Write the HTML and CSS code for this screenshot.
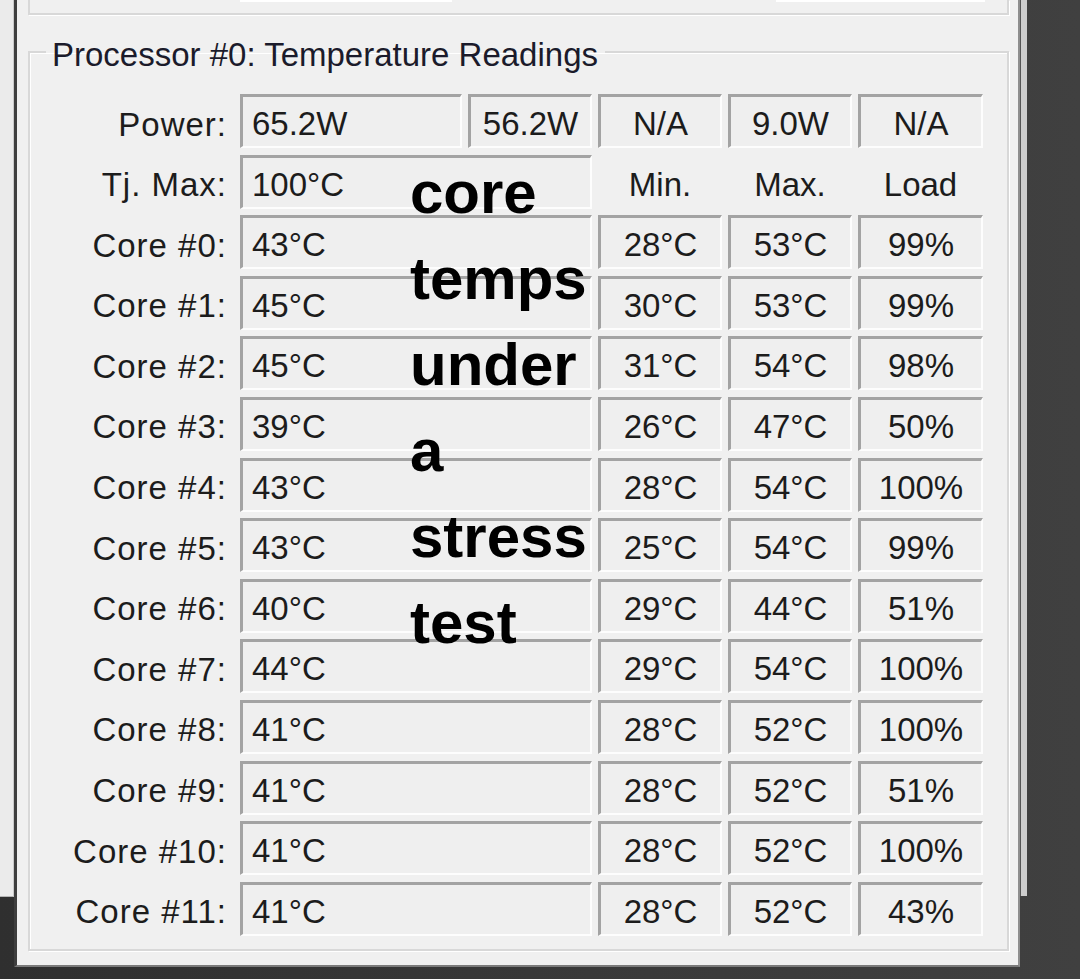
FILE: index.html
```html
<!DOCTYPE html>
<html>
<head>
<meta charset="utf-8">
<link rel="stylesheet" href="styles.css">
</head>
<body>
<div class="desktop">
  <div class="backwin backwin-left"></div>
  <div class="backwin backwin-right"></div>
  <div class="window">
    <div class="prev-group">
      <div class="prev-field field-a"></div>
      <div class="prev-field field-b"></div>
    </div>
    <fieldset class="group">
      <legend>Processor #0: Temperature Readings</legend>
      <div class="grid">
        <div class="lbl">Power:</div>
        <div class="cell left">65.2W</div>
        <div class="cell">56.2W</div>
        <div class="cell">N/A</div>
        <div class="cell">9.0W</div>
        <div class="cell">N/A</div>

        <div class="lbl">Tj. Max:</div>
        <div class="cell left span2">100°C</div>
        <div class="hdr">Min.</div>
        <div class="hdr">Max.</div>
        <div class="hdr">Load</div>

        <div class="lbl">Core #0:</div><div class="cell left span2">43°C</div><div class="cell">28°C</div><div class="cell">53°C</div><div class="cell">99%</div>
        <div class="lbl">Core #1:</div><div class="cell left span2">45°C</div><div class="cell">30°C</div><div class="cell">53°C</div><div class="cell">99%</div>
        <div class="lbl">Core #2:</div><div class="cell left span2">45°C</div><div class="cell">31°C</div><div class="cell">54°C</div><div class="cell">98%</div>
        <div class="lbl">Core #3:</div><div class="cell left span2">39°C</div><div class="cell">26°C</div><div class="cell">47°C</div><div class="cell">50%</div>
        <div class="lbl">Core #4:</div><div class="cell left span2">43°C</div><div class="cell">28°C</div><div class="cell">54°C</div><div class="cell">100%</div>
        <div class="lbl">Core #5:</div><div class="cell left span2">43°C</div><div class="cell">25°C</div><div class="cell">54°C</div><div class="cell">99%</div>
        <div class="lbl">Core #6:</div><div class="cell left span2">40°C</div><div class="cell">29°C</div><div class="cell">44°C</div><div class="cell">51%</div>
        <div class="lbl">Core #7:</div><div class="cell left span2">44°C</div><div class="cell">29°C</div><div class="cell">54°C</div><div class="cell">100%</div>
        <div class="lbl">Core #8:</div><div class="cell left span2">41°C</div><div class="cell">28°C</div><div class="cell">52°C</div><div class="cell">100%</div>
        <div class="lbl">Core #9:</div><div class="cell left span2">41°C</div><div class="cell">28°C</div><div class="cell">52°C</div><div class="cell">51%</div>
        <div class="lbl">Core #10:</div><div class="cell left span2">41°C</div><div class="cell">28°C</div><div class="cell">52°C</div><div class="cell">100%</div>
        <div class="lbl">Core #11:</div><div class="cell left span2">41°C</div><div class="cell">28°C</div><div class="cell">52°C</div><div class="cell">43%</div>
      </div>
    </fieldset>
    <div class="note">core<br>temps<br>under<br>a<br>stress<br>test</div>
  </div>
</div>
</body>
</html>
```

FILE: styles.css
```css
html, body {
  margin: 0;
  padding: 0;
}
body {
  background: #383838;
  width: 1080px;
  height: 979px;
  overflow: hidden;
  font-family: "Liberation Sans", Arial, sans-serif;
}
.desktop {
  position: relative;
  width: 1080px;
  height: 979px;
  background: linear-gradient(to right, #2f2f2f 0%, #3a3a3a 60%, #404040 100%);
}
.backwin {
  position: absolute;
  top: 0;
  height: 896px;
}
.backwin-left {
  left: 0;
  width: 13px;
  background: #ebebeb;
  border-right: 1px solid #c9c9c9;
  border-bottom: 1px solid #b5b5b5;
}
.backwin-right {
  left: 1020px;
  width: 7px;
  background: #cdcdcd;
  border-left: 1px solid #555;
  box-sizing: border-box;
}
.window {
  position: absolute;
  left: 14px;
  top: 0;
  width: 1006px;
  height: 967px;
  box-sizing: border-box;
  background: #f0f0f0;
  border-left: 3px solid #3e3e3e;
  border-right: 2px solid #8e8e8e;
  border-bottom: 2px solid #7a7a7a;
}
.prev-group {
  margin: 0 9px 0 11px;
  height: 15px;
  box-sizing: border-box;
  border: 2px solid #d8d8d8;
  border-top: none;
  box-shadow: 1px 1px 0 #fff;
  display: flex;
  align-items: flex-start;
  padding-left: 210px;
  gap: 324px;
}
.prev-field {
  height: 2px;
  background: #fff;
}
.field-a { width: 212px; }
.field-b { width: 209px; }

.group {
  margin: 16px 9px 0 11px;
  padding: 21px 0 13px 0;
  border: 2px solid #d8d8d8;
  box-shadow: 1px 1px 0 #fff, inset 1px 1px 0 #fff;
  min-inline-size: 0;
}
.group legend {
  margin-left: 16px;
  padding: 6px 7px 0 6px;
  font-size: 33px;
  line-height: 36px;
  color: #1b1b2b;
}
.grid {
  display: grid;
  grid-template-columns: 204px 222px 124px 124px 124px 125px;
  grid-auto-rows: 54px;
  column-gap: 6px;
  row-gap: 6.6px;
  font-size: 33px;
  color: #1c1c1c;
}
.lbl {
  display: flex;
  align-items: center;
  justify-content: flex-end;
  padding: 7px 7px 0 0;
  letter-spacing: 1px;
  white-space: nowrap;
}
.hdr {
  display: flex;
  align-items: center;
  justify-content: center;
  padding-top: 6px;
}
.cell {
  box-sizing: border-box;
  display: flex;
  align-items: center;
  justify-content: center;
  border-top: 3px solid #a3a3a3;
  border-left: 3px solid #a3a3a3;
  border-right: 2px solid #fdfdfd;
  border-bottom: 2px solid #fdfdfd;
  background: #efefef;
  padding-top: 5px;
  white-space: nowrap;
}
.cell.left {
  justify-content: flex-start;
  padding-left: 9px;
}
.span2 {
  grid-column: span 2;
}
.note {
  position: absolute;
  left: 393px;
  top: 150px;
  font-family: "Liberation Sans", Arial, sans-serif;
  font-weight: bold;
  font-size: 60px;
  line-height: 86px;
  color: #000;
}
```
